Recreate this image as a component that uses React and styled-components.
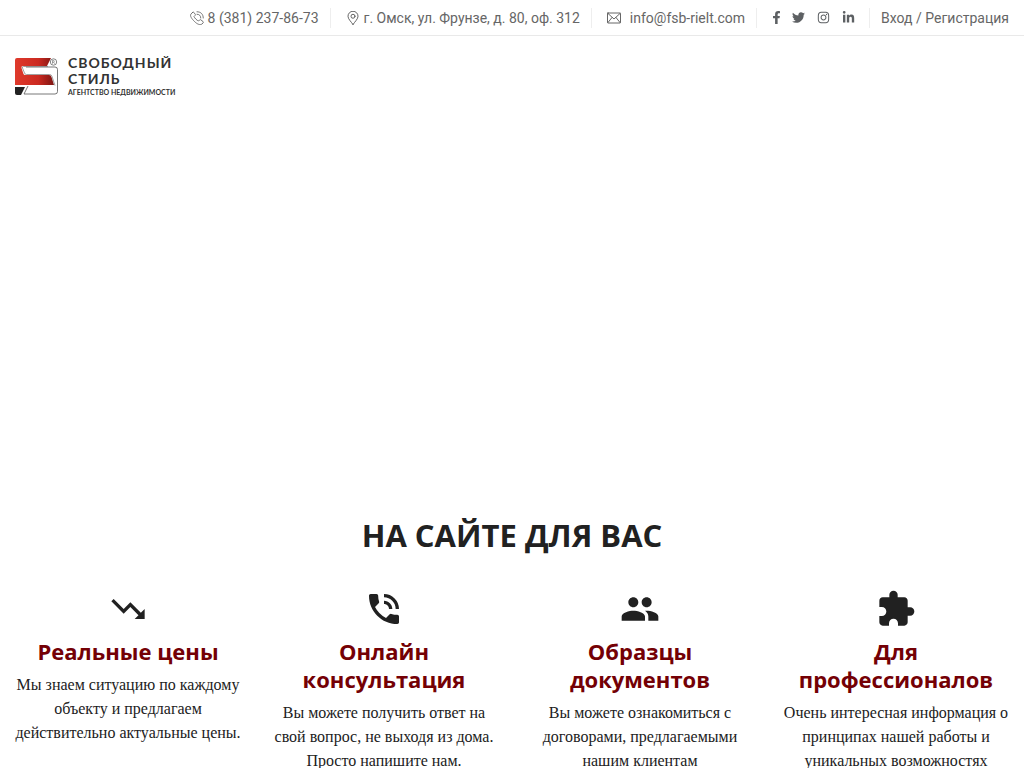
import styled, { createGlobalStyle } from "styled-components";
import { FaFacebookF, FaInstagram, FaLinkedinIn, FaTwitter } from "react-icons/fa";
import { MdExtension, MdPeople, MdPhoneInTalk, MdTrendingDown } from "react-icons/md";

const GlobalStyle = createGlobalStyle`
  * {
    box-sizing: border-box;
  }

  body {
    margin: 0;
    background-color: #fff;
    color: #212121;
    font-family: "Liberation Serif", serif;
    font-size: 16px;
    line-height: 24px;
  }

  a {
    color: inherit;
    text-decoration: none;
  }
`;

const TopBar = styled.div`
  display: flex;
  justify-content: flex-end;
  align-items: center;
  height: 36px;
  padding: 0 4px;
  border-bottom: 1px solid #e9e9e9;
  color: #666;
  font-family: Roboto, sans-serif;
  font-size: 14px;
  line-height: 20px;
`;

const TopItem = styled.div`
  display: flex;
  align-items: center;
  gap: ${({ $gap }) => $gap || 4}px;
  height: 20px;
  padding: 0 ${({ $right }) => $right || 11}px 0 ${({ $left }) => $left || 11}px;
  white-space: nowrap;

  & + & {
    border-left: 1px solid #eee;
  }
`;

const TopLink = styled.a`
  display: flex;
  align-items: center;
  gap: ${({ $gap }) => $gap || 4}px;
`;

const LineIcon = styled.svg`
  width: 14px;
  height: 14px;
  fill: none;
  stroke: #555;
  stroke-linecap: round;
  stroke-linejoin: round;
`;

const SocialLink = styled.a`
  display: flex;
  justify-content: center;
  width: ${({ $width }) => $width}px;
  color: #5d6063;
  font-size: 13px;

  > svg {
    flex-shrink: 0;
  }
`;

const Header = styled.header`
  padding: 19px 15px 16px;
`;

const Logo = styled.a`
  display: inline-flex;
  align-items: center;
  gap: 10px;
  color: #333;
  font-family: Lato, sans-serif;
`;

const LogoMark = styled.svg`
  width: 43px;
  height: 38px;
`;

const LogoName = styled.span`
  display: block;
  font-size: 14px;
  font-weight: 700;
  letter-spacing: 1px;
  line-height: 16px;
`;

const LogoNote = styled.span`
  display: block;
  font-size: 7px;
  font-weight: 700;
  line-height: 10px;
`;

const Hero = styled.section`
  height: 396px;
`;

const Services = styled.section`
  padding-bottom: 40px;
`;

const Title = styled.h2`
  margin: 0 0 33px;
  font-family: "Open Sans", sans-serif;
  font-size: 31px;
  font-weight: 700;
  line-height: 42px;
  text-align: center;
`;

const Grid = styled.div`
  display: grid;
  grid-template-columns: repeat(4, 1fr);
`;

const Card = styled.article`
  padding: 0 15px;
  text-align: center;

  > svg {
    display: block;
    margin: 0 auto 8px;
    font-size: 40px;
  }
`;

const CardTitle = styled.h3`
  margin: 0 0 8px;
  color: #740005;
  font-family: "Open Sans", sans-serif;
  font-size: 22px;
  font-weight: 700;
  line-height: 28px;
`;

const CardText = styled.p`
  margin: 0;
`;

const services = [
  {
    icon: MdTrendingDown,
    title: "Реальные цены",
    text: "Мы знаем ситуацию по каждому объекту и предлагаем действительно актуальные цены.",
  },
  {
    icon: MdPhoneInTalk,
    title: "Онлайн консультация",
    text: "Вы можете получить ответ на свой вопрос, не выходя из дома. Просто напишите нам.",
  },
  {
    icon: MdPeople,
    title: "Образцы документов",
    text: "Вы можете ознакомиться с договорами, предлагаемыми нашим клиентам",
  },
  {
    icon: MdExtension,
    title: "Для профессионалов",
    text: "Очень интересная информация о принципах нашей работы и уникальных возможностях",
  },
];

const socials = [
  { icon: FaFacebookF, label: "Facebook", width: 8 },
  { icon: FaTwitter, label: "Twitter", width: 13 },
  { icon: FaInstagram, label: "Instagram", width: 13 },
  { icon: FaLinkedinIn, label: "LinkedIn", width: 13 },
];

function PhoneIcon() {
  return (
    <LineIcon viewBox="0 0 28 28" strokeWidth="1.6" aria-hidden="true">
      <path d="M5 3 2 6c-3 4 2 10 7 15s11 8 15 5l2-2c1-1 1-2 0-3l-4-3c-1-1-2-1-3 0l-2 2c-3-1-8-6-9-9l2-2c1-1 1-2 0-3L8 3C7 2 6 2 5 3z" />
      <path d="M14 6.500c5 0 7.500 3 7.500 7.500M14 1.500c8 0 12.500 5 12.500 12.500" />
    </LineIcon>
  );
}

function PinIcon() {
  return (
    <LineIcon viewBox="0 0 28 28" strokeWidth="1.8" aria-hidden="true">
      <path d="M14 27C10 21 4 16 4 10.500a10 10 0 0 1 20 0C24 16 18 21 14 27z" />
      <circle cx="14" cy="10.500" r="4" />
    </LineIcon>
  );
}

function MailIcon() {
  return (
    <LineIcon viewBox="0 0 28 28" strokeWidth="1.8" aria-hidden="true">
      <rect x="1" y="4" width="26" height="20" rx="1" />
      <path d="m2 5 12 11L26 5M2 23l8-10M26 23l-8-10" />
    </LineIcon>
  );
}

function Mark() {
  return (
    <LogoMark viewBox="0 0 43 38" aria-hidden="true">
      <defs>
        <linearGradient id="red" x1="0" x2="1">
          <stop offset="0" stopColor="#df3a2c" />
          <stop offset="0.6" stopColor="#cb2a21" />
          <stop offset="1" stopColor="#7d1512" />
        </linearGradient>
      </defs>
      <path d="M11 10h29q2.500 0 2.500 2.500v22q0 2.500-2.500 2.500H9l4-8" fill="#fff" stroke="#555" strokeWidth="0.8" />
      <path d="M2 1h34l-4 8H8q-2 0-1.500 2l2 6q.5 1 1.500 1h24q2 0 2.500 2l2.500 8H0V3q0-2 2-2z" fill="url(#red)" />
      <path d="M33 9.500H8.500q-1.500 0-1 1.500l2 5q.5 1.500 2 1.500h23q2 0 2.500 2l3 9" fill="none" stroke="#777" strokeWidth="0.7" />
      <path d="M0 30h10l-4 8H2q-2 0-2-2z" fill="#222" />
      <circle cx="38.500" cy="5" r="3.200" fill="#fff" stroke="#666" strokeWidth="0.8" />
      <path d="M37.500 6.700V3.400h1.300q1 .9 0 1.800h-1.300m1.200 0 1 1.500" fill="none" stroke="#666" strokeWidth="0.600" />
    </LogoMark>
  );
}

export default function App() {
  return (
    <>
      <GlobalStyle />
      <TopBar>
        <TopItem>
          <TopLink href="tel:83812378673">
            <PhoneIcon />
            8 (381) 237-86-73
          </TopLink>
        </TopItem>
        <TopItem $left={15}>
          <PinIcon />
          г. Омск, ул. Фрунзе, д. 80, оф. 312
        </TopItem>
        <TopItem $left={15}>
          <TopLink href="mailto:info@fsb-rielt.com" $gap={9}>
            <MailIcon />
            info@fsb-rielt.com
          </TopLink>
        </TopItem>
        <TopItem $left={15} $right={14} $gap={12}>
          {socials.map(({ icon: Icon, label, width }) => (
            <SocialLink key={label} href="#" aria-label={label} $width={width}>
              <Icon />
            </SocialLink>
          ))}
        </TopItem>
        <TopItem>
          <a href="#">Вход / Регистрация</a>
        </TopItem>
      </TopBar>
      <Header>
        <Logo href="/">
          <Mark />
          <span>
            <LogoName>СВОБОДНЫЙ</LogoName>
            <LogoName>СТИЛЬ</LogoName>
            <LogoNote>АГЕНТСТВО НЕДВИЖИМОСТИ</LogoNote>
          </span>
        </Logo>
      </Header>
      <main>
        <Hero />
        <Services>
          <Title>НА САЙТЕ ДЛЯ ВАС</Title>
          <Grid>
            {services.map(({ icon: Icon, title, text }) => (
              <Card key={title}>
                <Icon />
                <CardTitle>{title}</CardTitle>
                <CardText>{text}</CardText>
              </Card>
            ))}
          </Grid>
        </Services>
      </main>
    </>
  );
}
